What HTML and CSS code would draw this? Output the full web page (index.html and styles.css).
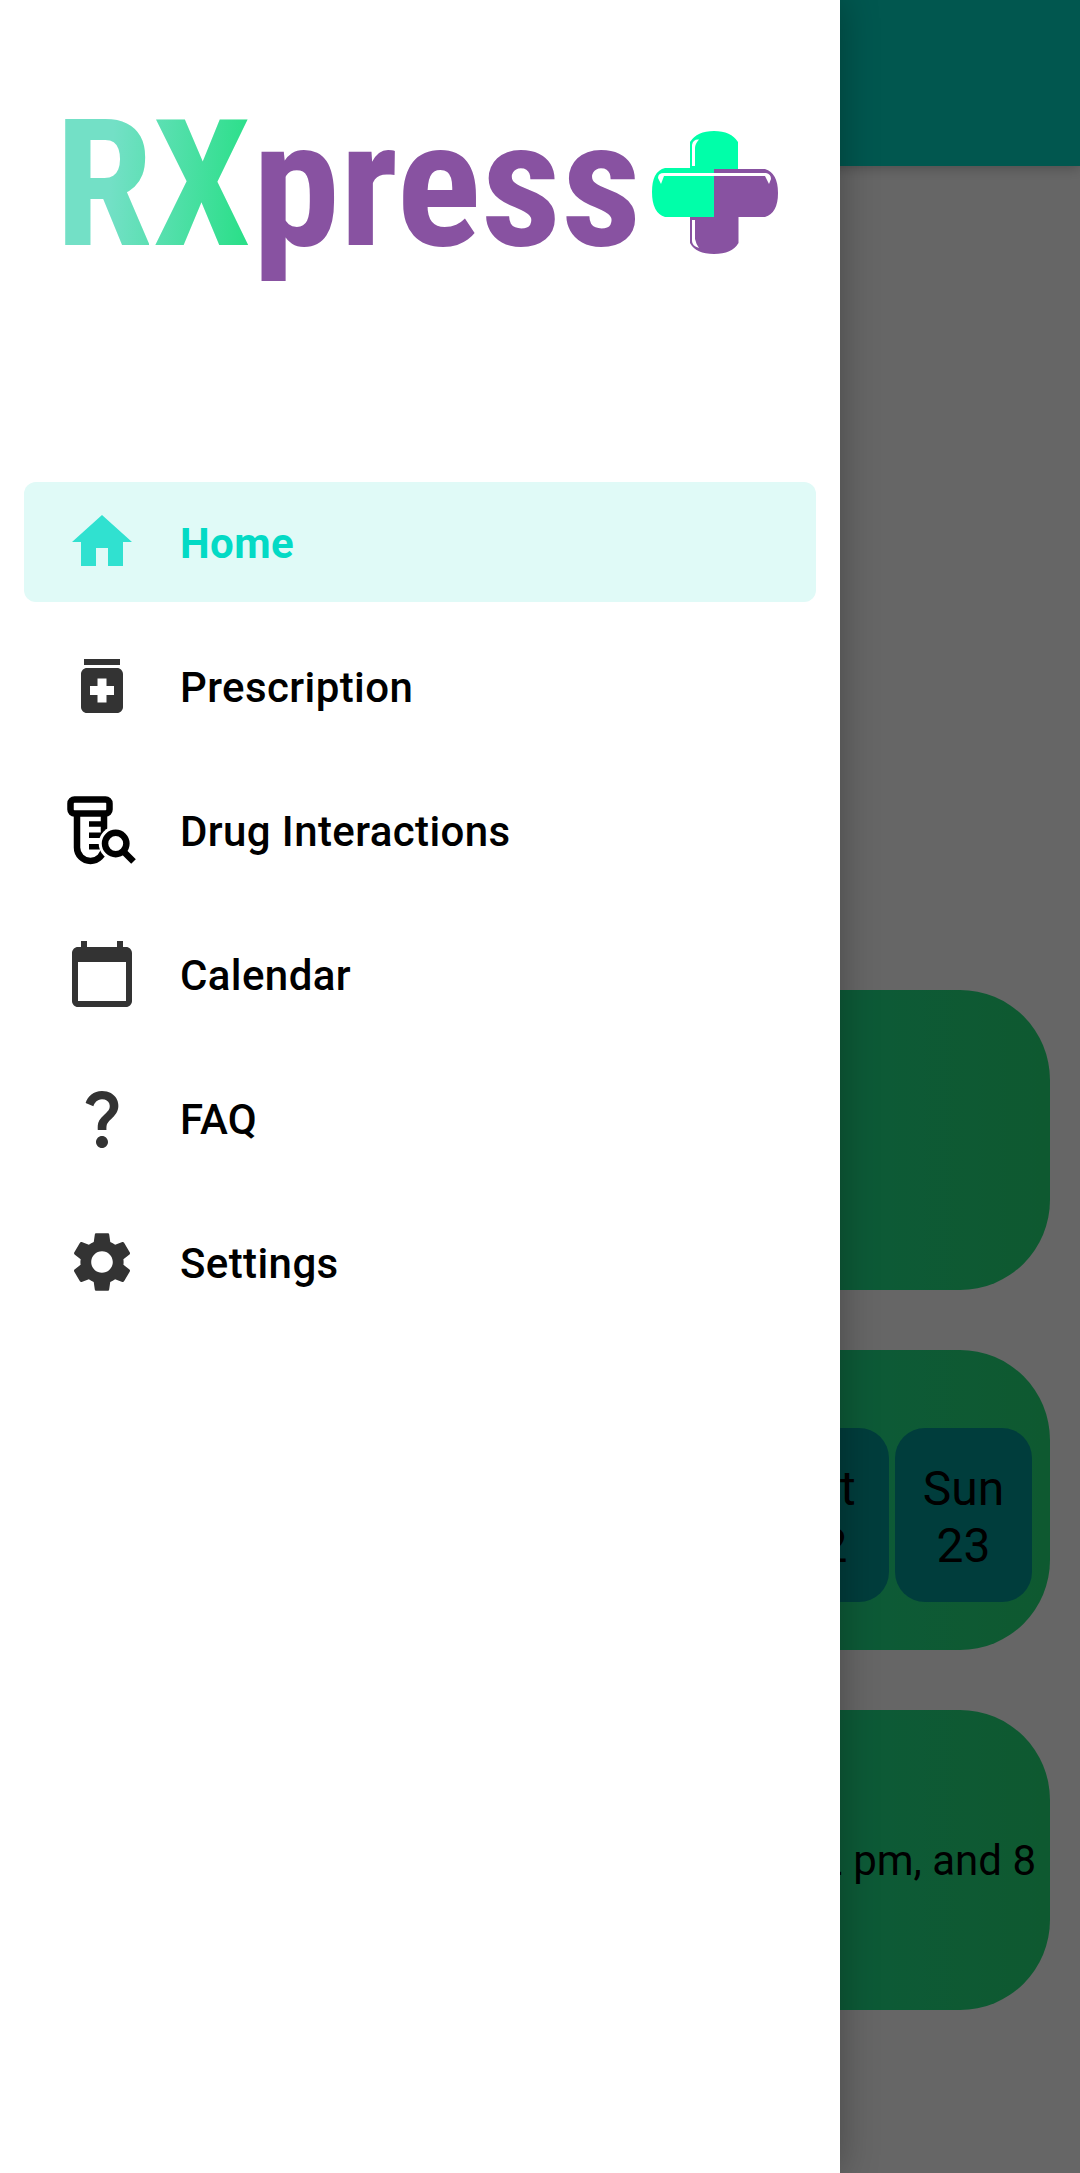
FILE: index.html
```html
<!DOCTYPE html>
<html lang="en">
<head>
<meta charset="utf-8">
<title>RXpress</title>
<link rel="stylesheet" href="styles.css">
</head>
<body>
<div class="screen">
  <main class="home">
    <header class="toolbar"></header>
    <div class="cards">
      <section class="card"></section>
      <section class="card week">
        <div class="day"><span>Sat</span><span>22</span></div>
        <div class="day"><span>Sun</span><span>23</span></div>
      </section>
      <section class="card reminder"><p>12 pm, and 8</p></section>
    </div>
  </main>
  <div class="scrim"></div>
  <aside class="drawer">
    <svg class="logo" viewBox="0 0 840 458">
      <defs>
        <linearGradient id="mint" gradientUnits="userSpaceOnUse" x1="65" y1="170" x2="248" y2="182">
          <stop offset="0.25" stop-color="#73e0c6"/><stop offset="1" stop-color="#2bdf89"/>
        </linearGradient>
      </defs>
      <text class="wordmark" y="244.5" textLength="196" lengthAdjust="spacingAndGlyphs" x="55" fill="url(#mint)">RX</text>
      <text class="wordmark" y="244.5" textLength="389" lengthAdjust="spacingAndGlyphs" x="252.400" fill="#8852a1">press</text>
      <path fill="#00ffa9" d="M690 168V142Q697 131 714 131T738 142V169H714V217H665Q652 213 652 192T665 168Z"/>
      <path fill="#8852a1" d="M714 169H765Q778 173 778 193T765 217H738.500V243Q732 254 714 254T690 243V217H714Z"/>
      <path fill="#fff" d="M692 166V145Q693 139 699 139.500Q695 144 695 148V166ZM692 220H695V239Q696 244 699 248Q692 246 692 241ZM658 178Q658 173 664 173H766Q771 174 771 179L769 184L765 176H664L661 184Z"/>
    </svg>
    <nav class="menu">
      <a class="item active"><svg class="icon" viewBox="0 0 24 24"><path d="M10 20v-6h4v6h5v-8h3L12 3 2 12h3v8z"/></svg><span>Home</span></a>
      <a class="item"><svg class="icon" viewBox="0 0 24 24"><path d="M6 3h12v2H6zm11 3H7c-1.100 0-2 .9-2 2v11c0 1.100.9 2 2 2h10c1.100 0 2-.9 2-2V8c0-1.100-.9-2-2-2zm-1 9h-2.500v2.500h-3V15H8v-3h2.500V9.500h3V12H16v3z"/></svg><span>Prescription</span></a>
      <a class="item"><svg class="icon lab" viewBox="0 0 72 72">
        <rect x="4.500" y="5.400" width="39" height="14.200" rx="4"/>
        <path d="M11 21V53.500A13.500 13.500 0 0 0 38 53.500V21"/>
        <path class="ticks" d="M23 30H38M23 41.300H38M23 52.800H36"/>
        <circle class="halo" cx="49.700" cy="49.500" r="17"/>
        <circle cx="49.700" cy="49.500" r="10.700"/>
        <path d="M57 57L67.500 67.500"/>
      </svg><span>Drug Interactions</span></a>
      <a class="item"><svg class="icon" viewBox="0 0 24 24"><path d="M20 3h-1V1h-2v2H7V1H5v2H4c-1.100 0-2 .9-2 2v16c0 1.100.9 2 2 2h16c1.100 0 2-.9 2-2V5c0-1.100-.9-2-2-2zm0 18H4V8h16v13z"/></svg><span>Calendar</span></a>
      <a class="item"><svg class="icon" viewBox="0 0 24 24"><path d="M11.070 12.850c.77-1.390 2.250-2.210 3.110-3.440.91-1.290.4-3.700-2.180-3.700-1.690 0-2.520 1.280-2.870 2.340L6.540 6.960C7.250 4.830 9.180 3 11.990 3c2.350 0 3.960 1.070 4.780 2.410.7 1.150 1.110 3.300.03 4.900-1.200 1.770-2.350 2.310-2.970 3.450-.25.46-.35.76-.35 2.240h-2.890c-.01-.78-.13-2.050.48-3.150zM14 20c0 1.100-.9 2-2 2s-2-.9-2-2 .9-2 2-2 2 .9 2 2z"/></svg><span>FAQ</span></a>
      <a class="item"><svg class="icon" viewBox="0 0 24 24"><path d="M19.140 12.940c.04-.3.060-.61.060-.94 0-.32-.020-.64-.070-.94l2.030-1.580c.18-.14.23-.41.120-.61l-1.920-3.320c-.12-.22-.37-.29-.59-.22l-2.390.96c-.5-.38-1.030-.7-1.620-.94l-.36-2.540c-.040-.24-.24-.41-.48-.41h-3.840c-.24 0-.43.17-.47.41l-.36 2.540c-.59.24-1.130.57-1.620.94l-2.390-.96c-.22-.080-.47 0-.59.22L2.740 8.870c-.12.21-.080.47.12.61l2.030 1.580c-.050.3-.090.63-.090.94s.020.64.070.94l-2.030 1.580c-.18.14-.23.41-.12.61l1.920 3.320c.12.22.37.29.59.22l2.390-.96c.5.38 1.030.7 1.620.94l.36 2.540c.050.24.24.41.48.41h3.840c.24 0 .44-.17.47-.41l.36-2.540c.59-.24 1.130-.56 1.620-.94l2.390.96c.22.080.47 0 .59-.22l1.920-3.320c.12-.22.070-.47-.12-.61l-2.010-1.580zM12 15.600c-1.980 0-3.600-1.620-3.600-3.600s1.620-3.600 3.600-3.600 3.600 1.620 3.600 3.600-1.620 3.600-3.600 3.600z"/></svg><span>Settings</span></a>
    </nav>
  </aside>
</div>
</body>
</html>
```
FILE: styles.css
```css
body {
  margin: 0;
  font-family: Roboto, sans-serif;
  color: #000;
}
.screen {
  position: relative;
  height: 2173px;
  overflow: hidden;
  background: #fff;
}
.toolbar {
  height: 166px;
  background: #03dac5;
  box-shadow: 0 2px 12px rgba(0, 0, 0, 0.25);
}
.cards {
  display: flex;
  flex-direction: column;
  gap: 60px;
  padding: 824px 30px 0;
}
.card {
  box-sizing: border-box;
  height: 300px;
  border-radius: 90px;
  background: linear-gradient(90deg, #18e6d8, #24df78);
  display: flex;
  justify-content: flex-end;
}
.week {
  gap: 6px;
  padding: 78px 18px 48px;
}
.day {
  box-sizing: border-box;
  width: 137px;
  padding-top: 4px;
  border-radius: 30px;
  background: #009997;
  display: flex;
  flex-direction: column;
  align-items: center;
  justify-content: center;
  font-size: 48px;
  line-height: 57px;
}
.reminder {
  align-items: center;
  padding-right: 14px;
  font-size: 42px;
  white-space: nowrap;
}
.reminder p {
  margin: 0;
}
.scrim {
  position: absolute;
  inset: 0;
  background: rgba(0, 0, 0, 0.6);
}
.drawer {
  position: absolute;
  top: 0;
  bottom: 0;
  left: 0;
  width: 840px;
  background: #fff;
  box-shadow: 0 0 36px rgba(0, 0, 0, 0.3);
}
.logo {
  display: block;
  width: 840px;
  height: 458px;
}
.wordmark {
  font-size: 176px;
  font-weight: 700;
  font-stretch: 75%;
}
.menu {
  display: flex;
  flex-direction: column;
  gap: 24px;
  padding: 24px;
}
.item {
  display: flex;
  align-items: center;
  gap: 42px;
  height: 120px;
  padding-left: 42px;
  border-radius: 12px;
  font-size: 42px;
  font-weight: 500;
  letter-spacing: 0.4px;
}
.item span {
  padding-top: 2px;
}
.active {
  background: #e0faf7;
  color: #03dac5;
  font-weight: 700;
}
.icon {
  width: 72px;
  height: 72px;
  fill: #333;
}
.active .icon {
  fill: #30e1d0;
}
.lab {
  fill: none;
  stroke: #000;
  stroke-width: 6.5;
}
.lab .ticks {
  stroke-width: 5.6;
}
.lab .halo {
  fill: #fff;
  stroke: none;
}
```
